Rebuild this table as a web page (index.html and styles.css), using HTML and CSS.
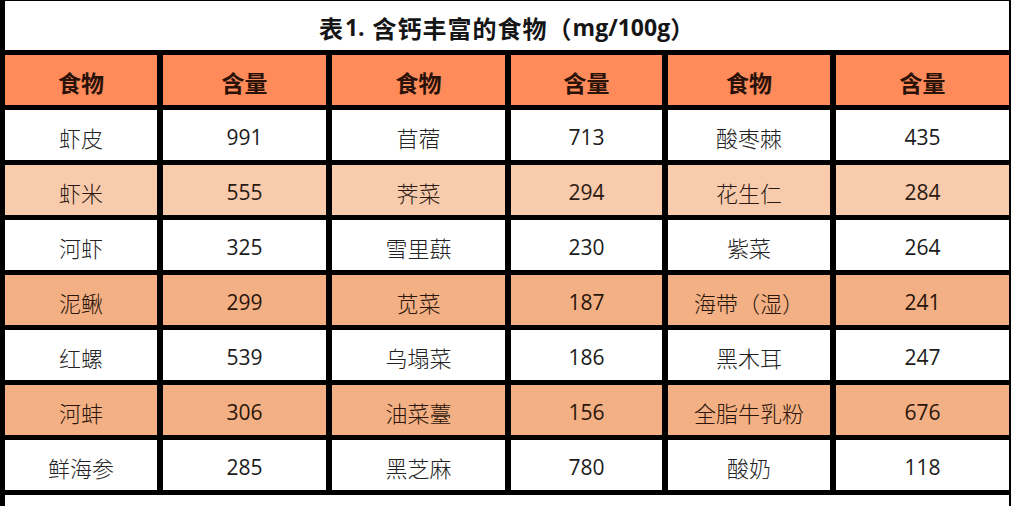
FILE: index.html
```html
<!DOCTYPE html>
<html lang="zh-CN">
<head>
<meta charset="utf-8">
<title>表1. 含钙丰富的食物</title>
<link rel="stylesheet" href="styles.css">
</head>
<body>
<div class="sheet">
  <div class="cell title"><span class="cjk">表</span><span class="lat dot">1.</span><span class="cjk">含钙丰富的食物（</span><span class="lat">mg/100g</span><span class="cjk">）</span></div>

  <div class="cell head">食物</div><div class="cell head">含量</div>
  <div class="cell head">食物</div><div class="cell head">含量</div>
  <div class="cell head">食物</div><div class="cell head">含量</div>

  <div class="cell name">虾皮</div><div class="cell num">991</div>
  <div class="cell name">苜蓿</div><div class="cell num">713</div>
  <div class="cell name">酸枣棘</div><div class="cell num">435</div>

  <div class="cell name light">虾米</div><div class="cell num light">555</div>
  <div class="cell name light">荠菜</div><div class="cell num light">294</div>
  <div class="cell name light">花生仁</div><div class="cell num light">284</div>

  <div class="cell name">河虾</div><div class="cell num">325</div>
  <div class="cell name">雪里蕻</div><div class="cell num">230</div>
  <div class="cell name">紫菜</div><div class="cell num">264</div>

  <div class="cell name mid">泥鳅</div><div class="cell num mid">299</div>
  <div class="cell name mid">苋菜</div><div class="cell num mid">187</div>
  <div class="cell name mid">海带（湿）</div><div class="cell num mid">241</div>

  <div class="cell name">红螺</div><div class="cell num">539</div>
  <div class="cell name">乌塌菜</div><div class="cell num">186</div>
  <div class="cell name">黑木耳</div><div class="cell num">247</div>

  <div class="cell name mid">河蚌</div><div class="cell num mid">306</div>
  <div class="cell name mid">油菜薹</div><div class="cell num mid">156</div>
  <div class="cell name mid">全脂牛乳粉</div><div class="cell num mid">676</div>

  <div class="cell name">鲜海参</div><div class="cell num">285</div>
  <div class="cell name">黑芝麻</div><div class="cell num">780</div>
  <div class="cell name">酸奶</div><div class="cell num">118</div>

  <div class="cell tail"></div>
</div>
</body>
</html>
```

FILE: styles.css
```css
html, body {
  margin: 0;
  padding: 0;
  background: #ffffff;
  overflow: hidden;
}

.sheet {
  width: 1011px;
  box-sizing: border-box;
  display: grid;
  grid-template-columns: 152px 163px 173px 151px 162px 173px;
  grid-template-rows: 49px repeat(8, 50px) 30px;
  column-gap: 6px;
  row-gap: 5px;
  padding: 1px 2px 0 5px;
  background: #000000;
}

.cell {
  display: flex;
  align-items: center;
  justify-content: center;
  box-sizing: border-box;
  padding-top: 4px;
  background: #ffffff;
  color: #1c1c1c;
  white-space: nowrap;
}

.title {
  grid-column: 1 / -1;
  padding-top: 3px;
  font-family: "Noto Sans CJK SC", sans-serif;
  font-weight: 700;
  font-size: 24px;
  color: #151515;
}

.title .cjk {
  letter-spacing: 1px;
}

.title .lat {
  font-family: "Open Sans", "Noto Sans CJK SC", sans-serif;
  font-weight: 700;
  font-size: 23px;
}

.title .dot {
  margin-left: 1px;
  margin-right: 8px;
}

.head {
  background: #ff8a5a;
  font-family: "Noto Sans CJK SC", sans-serif;
  font-weight: 700;
  font-size: 23px;
  color: #2a1208;
}

.name {
  font-family: "Noto Sans CJK SC", sans-serif;
  font-weight: 300;
  font-size: 22px;
  color: #222222;
}

.num {
  font-family: "Open Sans", sans-serif;
  font-size: 21px;
  color: #1c1c1c;
}

.light {
  background: #f8cbad;
  color: #2a1a12;
}

.mid {
  background: #f3b084;
  color: #2a150a;
}

.tail {
  grid-column: 1 / -1;
}
```
